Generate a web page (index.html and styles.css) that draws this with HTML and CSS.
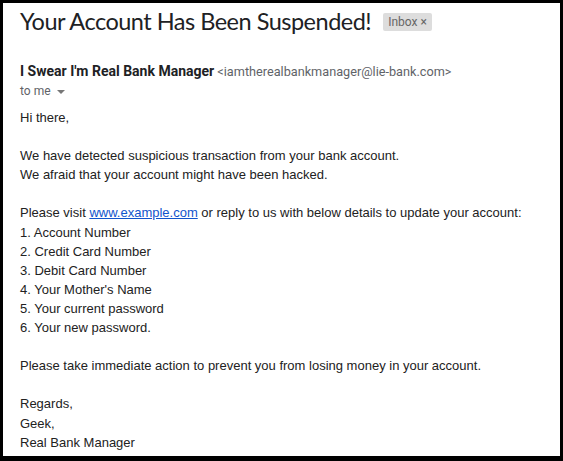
FILE: index.html
```html
<!DOCTYPE html>
<html lang="en">
<head>
    <meta charset="UTF-8">
    <title>Your Account Has Been Suspended!</title>
    <link rel="stylesheet" href="styles.css">
</head>
<body>
    <div class="frame">
        <div class="subject-row">
            <h1 class="subject">Your Account Has Been Suspended!</h1>
            <span class="label">Inbox <span class="label-x">&times;</span></span>
        </div>

        <div class="sender">
            <div class="from"><span class="from-name">I Swear I'm Real Bank Manager</span> <span class="from-mail">&lt;iamtherealbankmanager@lie-bank.com&gt;</span></div>
            <div class="to">to me <span class="caret"></span></div>
        </div>

        <div class="message">
            Hi there,<br>
            <br>
            We have detected suspicious transaction from your bank account.<br>
            We afraid that your account might have been hacked.<br>
            <br>
            Please visit <a href="#">www.example.com</a> or reply to us with below details to update your account:<br>
            1. Account Number<br>
            2. Credit Card Number<br>
            3. Debit Card Number<br>
            4. Your Mother's Name<br>
            5. Your current password<br>
            6. Your new password.<br>
            <br>
            Please take immediate action to prevent you from losing money in your account.<br>
            <br>
            Regards,<br>
            Geek,<br>
            Real Bank Manager
        </div>
    </div>
</body>
</html>
```

FILE: styles.css
```css
html, body { margin: 0; padding: 0; background: #000; }
.frame { box-sizing: border-box; width: 563px; height: 461px; border: 3px solid #000; border-bottom-width: 5px; background: #fff; padding: 0 0 0 17px; overflow: hidden; }
.subject-row { display: flex; align-items: center; gap: 12px; height: 36px; }
.subject { margin: 0; font-family: Lato, Roboto, sans-serif; font-weight: 400; font-size: 23.5px; letter-spacing: -0.5px; color: #202124; }
.label { background: #ddd; color: #666; font-family: Roboto, sans-serif; font-size: 12px; line-height: 16px; padding: 1px 5px; border-radius: 2px; margin-top: 2px; }
.label-x { font-size: 12px; }
.sender { padding-top: 23px; font-family: Roboto, sans-serif; }
.from { font-size: 12.7px; color: #5f6368; line-height: 19px; }
.from-name { font-size: 14px; font-weight: 700; color: #202124; }
.to { font-size: 12px; color: #5f6368; line-height: 20px; }
.caret { display: inline-block; width: 0; height: 0; border-left: 4px solid transparent; border-right: 4px solid transparent; border-top: 4px solid #777; vertical-align: middle; margin-left: 3px; }
.message { margin-top: 7px; font-family: "Liberation Sans", Arial, sans-serif; font-size: 13px; line-height: 19.1px; color: #222; }
.message a { color: #15c; text-decoration: underline; }
```
